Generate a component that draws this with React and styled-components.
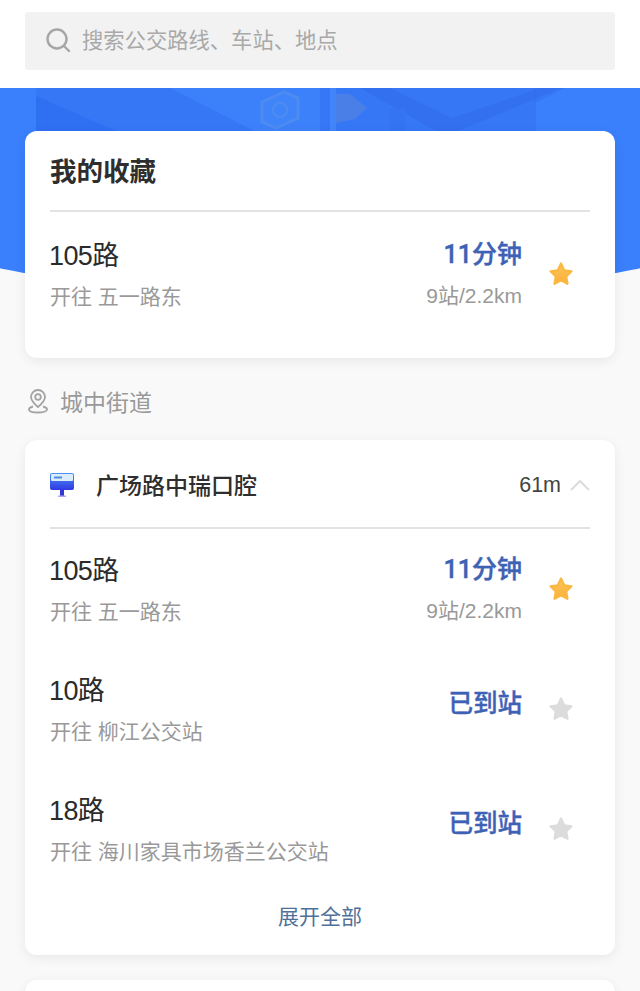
import styled, { createGlobalStyle } from 'styled-components';

const GlobalStyle = createGlobalStyle`
  html, body {
    margin: 0;
    padding: 0;
    background: #f9f9f9;
    font-family: "Liberation Sans", "Noto Sans CJK SC", sans-serif;
  }
  * { box-sizing: border-box; }
`

const Page = styled.div`
  height: 991px;
  overflow: hidden;
  position: relative;
  width: 640px;
`

const SearchHeader = styled.header`
  background: #fff;
  height: 88px;
  padding: 12px 25px 0;
`

const SearchBox = styled.div`
  align-items: center;
  background: #f2f2f2;
  border-radius: 3px;
  color: #a9a9a9;
  display: flex;
  font-size: 21.3px;
  gap: 11px;
  height: 58px;
  padding: 0 0 2px 20px;
`

const Placeholder = styled.span`
  padding-bottom: 3px;
`

const Banner = styled.div`
  background: #3a7ffb;
  border-radius: 0 0 50% 50% / 0 0 30px 30px;
  height: 200px;
  left: -20px;
  overflow: hidden;
  position: absolute;
  top: 88px;
  width: 680px;
`

const BannerArt = styled.svg`
  display: block;
  margin-left: 20px;
`

const Content = styled.main`
  display: flex;
  flex-direction: column;
  padding: 43px 25px 0;
  position: relative;
`

const Card = styled.section`
  background: #fff;
  border-radius: 12px;
  box-shadow: 0 3px 12px rgba(0, 0, 0, 0.07);
  display: flex;
  flex-direction: column;
  flex-shrink: 0;
  height: ${props => props.$height}px;
  margin-bottom: ${props => props.$gap || 0}px;
  padding: 0 25px;
`

const CardTitle = styled.h2`
  align-items: center;
  border-bottom: 2px solid #e3e3e3;
  color: #2e2e2e;
  display: flex;
  font-size: 26.5px;
  font-weight: 700;
  height: 81px;
  line-height: 1;
  margin: 0 0 10px;
  padding-top: 3px;
`

const StopHeader = styled.div`
  align-items: center;
  border-bottom: 2px solid #e3e3e3;
  display: flex;
  height: 89px;
`

const StopBadge = styled.svg`
  display: block;
  flex-shrink: 0;
  margin: 2px 0 0 -1px;
`

const StopName = styled.h3`
  color: #2e2e2e;
  flex: 1;
  font-size: 23px;
  font-weight: 500;
  margin: 0 0 0 21px;
`

const Distance = styled.span`
  color: #444;
  font-size: 21.5px;
  margin-top: 3px;
`

const RouteRow = styled.div`
  align-items: center;
  display: flex;
  height: ${props => props.$height || 120}px;
`

const RouteInfo = styled.div`
  display: flex;
  flex: 1;
  flex-direction: column;
  gap: 9px;
  padding-top: 2px;
`

const RouteName = styled.div`
  color: #2b2b2b;
  font-size: 27px;
  letter-spacing: -0.6px;
  line-height: 34px;
  margin-left: -1px;
`

const Subtle = styled.div`
  color: #999;
  font-size: 21px;
  line-height: 30px;
`

const RouteEta = styled.div`
  align-items: flex-end;
  display: flex;
  flex-direction: column;
  gap: 9px;
  margin-bottom: ${props => props.$lift || 0}px;
  margin-right: 26px;
`

const Eta = styled.div`
  color: #3d62b5;
  font-family: Roboto, "Noto Sans CJK SC", sans-serif;
  font-size: ${props => props.$size || 25}px;
  font-weight: 500;
  line-height: 34px;
  -webkit-text-stroke: 0.4px #3d62b5;
`

const StarWrap = styled.svg`
  display: block;
  flex-shrink: 0;
  margin-right: 16px;
`

const LocationRow = styled.div`
  align-items: center;
  color: #999;
  display: flex;
  font-size: 23px;
  gap: 12px;
  height: 82px;
  padding: 3px 0 0 3px;
`

const ExpandLink = styled.a`
  color: #4f7199;
  display: block;
  font-size: 21px;
  line-height: 30px;
  margin-top: 13px;
  text-align: center;
  text-decoration: none;
`

const Chevron = styled.svg`
  display: block;
  margin: 2px 0 0 9px;
`

const Star = ({ active }) => (
  <StarWrap width="26" height="26" viewBox="0 0 26 26">
    <defs>
      <linearGradient id="starGold" x1="0" y1="0" x2="0" y2="1">
        <stop offset="0" stopColor="#fdc85a" />
        <stop offset="1" stopColor="#f9ae3a" />
      </linearGradient>
    </defs>
    <path
      d="M13 2.500l3.200 6.800 7.300 1-5.300 5.100 1.300 7.400-6.500-3.600-6.500 3.600 1.300-7.400-5.300-5.100 7.300-1z"
      fill={active ? 'url(#starGold)' : '#dcdcdc'}
      stroke={active ? '#fbb840' : '#dcdcdc'}
      strokeWidth="2.200"
      strokeLinejoin="round"
    />
  </StarWrap>
)

const SearchIcon = () => (
  <svg width="26" height="26" viewBox="0 0 26 26" fill="none" stroke="#a6a6a6" strokeWidth="2.400" strokeLinecap="round">
    <circle cx="12" cy="12" r="9.500" />
    <path d="M19.500 19.500l4.500 4.500" />
  </svg>
)

const PinIcon = () => (
  <svg width="20" height="26" viewBox="0 0 20 26" fill="none" stroke="#a3a3a3" strokeWidth="1.800">
    <path d="M10 19c-4-3.400-7-6.400-7-10a7 7 0 0 1 14 0c0 3.600-3 6.600-7 10z" />
    <circle cx="10" cy="9" r="2.800" />
    <path d="M5 18.500c-2.500.6-4 1.700-4 3 0 1.800 4 3 9 3s9-1.200 9-3c0-1.300-1.500-2.400-4-3" />
  </svg>
)

const StopIcon = () => (
  <StopBadge width="26" height="26" viewBox="0 0 26 26">
    <defs>
      <linearGradient id="stopBlue" x1="0" y1="0" x2="0" y2="1">
        <stop offset="0" stopColor="#4a96f5" />
        <stop offset="1" stopColor="#3038e2" />
      </linearGradient>
    </defs>
    <rect x="1" y="1" width="24" height="17" rx="2" fill="url(#stopBlue)" />
    <rect x="2" y="2" width="22" height="7" rx="1" fill="#dcecfa" />
    <rect x="5" y="4.500" width="8" height="2" fill="#4a8fd8" />
    <rect x="11" y="18" width="4" height="6" fill="#3438d0" />
    <rect x="9" y="23.500" width="8" height="1.500" fill="#a8aaec" />
  </StopBadge>
)

const routes = [
  { id: 1, name: '105路', to: '五一路东', eta: '11分钟', detail: '9站/2.2km', active: true },
  { id: 2, name: '10路', to: '柳江公交站', eta: '已到站', active: false },
  { id: 3, name: '18路', to: '海川家具市场香兰公交站', eta: '已到站', active: false },
]

const Route = ({ route }) => (
  <RouteRow>
    <RouteInfo>
      <RouteName>{route.name}</RouteName>
      <Subtle>开往 {route.to}</Subtle>
    </RouteInfo>
    <RouteEta $lift={route.detail ? 0 : 11}>
      <Eta $size={route.detail ? 25 : 24.5}>{route.eta}</Eta>
      {route.detail && <Subtle>{route.detail}</Subtle>}
    </RouteEta>
    <Star active={route.active} />
  </RouteRow>
)

const App = () => (
  <Page>
    <GlobalStyle />
    <SearchHeader>
      <SearchBox>
        <SearchIcon />
        <Placeholder>搜索公交路线、车站、地点</Placeholder>
      </SearchBox>
    </SearchHeader>
    <Banner>
      <BannerArt width="640" height="43" viewBox="0 0 640 43">
        <rect x="36" y="0" width="500" height="43" fill="#3677f6" />
        <path d="M36 8l80 35H36z" fill="#2f6ff2" />
        <path d="M170 0h102v43h-18z" fill="#3d81fa" />
        <rect x="272" y="0" width="48" height="43" fill="#3d81fa" />
        <path d="M262 14l22-10 14 6v20l-22 10-14-6z" fill="#3f84f8" stroke="#4c8bf2" strokeWidth="3" />
        <circle cx="280" cy="22" r="7" fill="none" stroke="#4c8bf2" strokeWidth="2.500" />
        <rect x="330" y="0" width="6" height="43" fill="#4285fa" />
        <path d="M336 6h14l17 14-12 11-19 4z" fill="#4a7fe8" />
        <path d="M360 0h30l62 30 88-30h22l-104 43h-22z" fill="#3069e6" opacity="0.45" />
        <rect x="390" y="20" width="16" height="23" fill="#3474f2" />
        <path d="M535 0h30l-30 15z" fill="#3069e6" opacity="0.3" />
      </BannerArt>
    </Banner>
    <Content>
      <Card $height={227}>
        <CardTitle>我的收藏</CardTitle>
        <RouteRow $height={104}>
          <RouteInfo>
            <RouteName>105路</RouteName>
            <Subtle>开往 五一路东</Subtle>
          </RouteInfo>
          <RouteEta>
            <Eta>11分钟</Eta>
            <Subtle>9站/2.2km</Subtle>
          </RouteEta>
          <Star active />
        </RouteRow>
      </Card>
      <LocationRow>
        <PinIcon />
        <span>城中街道</span>
      </LocationRow>
      <Card $height={515} $gap={25}>
        <StopHeader>
          <StopIcon />
          <StopName>广场路中瑞口腔</StopName>
          <Distance>61m</Distance>
          <Chevron width="20" height="12" viewBox="0 0 20 12" fill="none" stroke="#dcdcdc" strokeWidth="2">
            <path d="M1 11l9-9 9 9" />
          </Chevron>
        </StopHeader>
        {routes.map(route => <Route key={route.id} route={route} />)}
        <ExpandLink href="#">展开全部</ExpandLink>
      </Card>
      <Card $height={60} />
    </Content>
  </Page>
)

export default App;
